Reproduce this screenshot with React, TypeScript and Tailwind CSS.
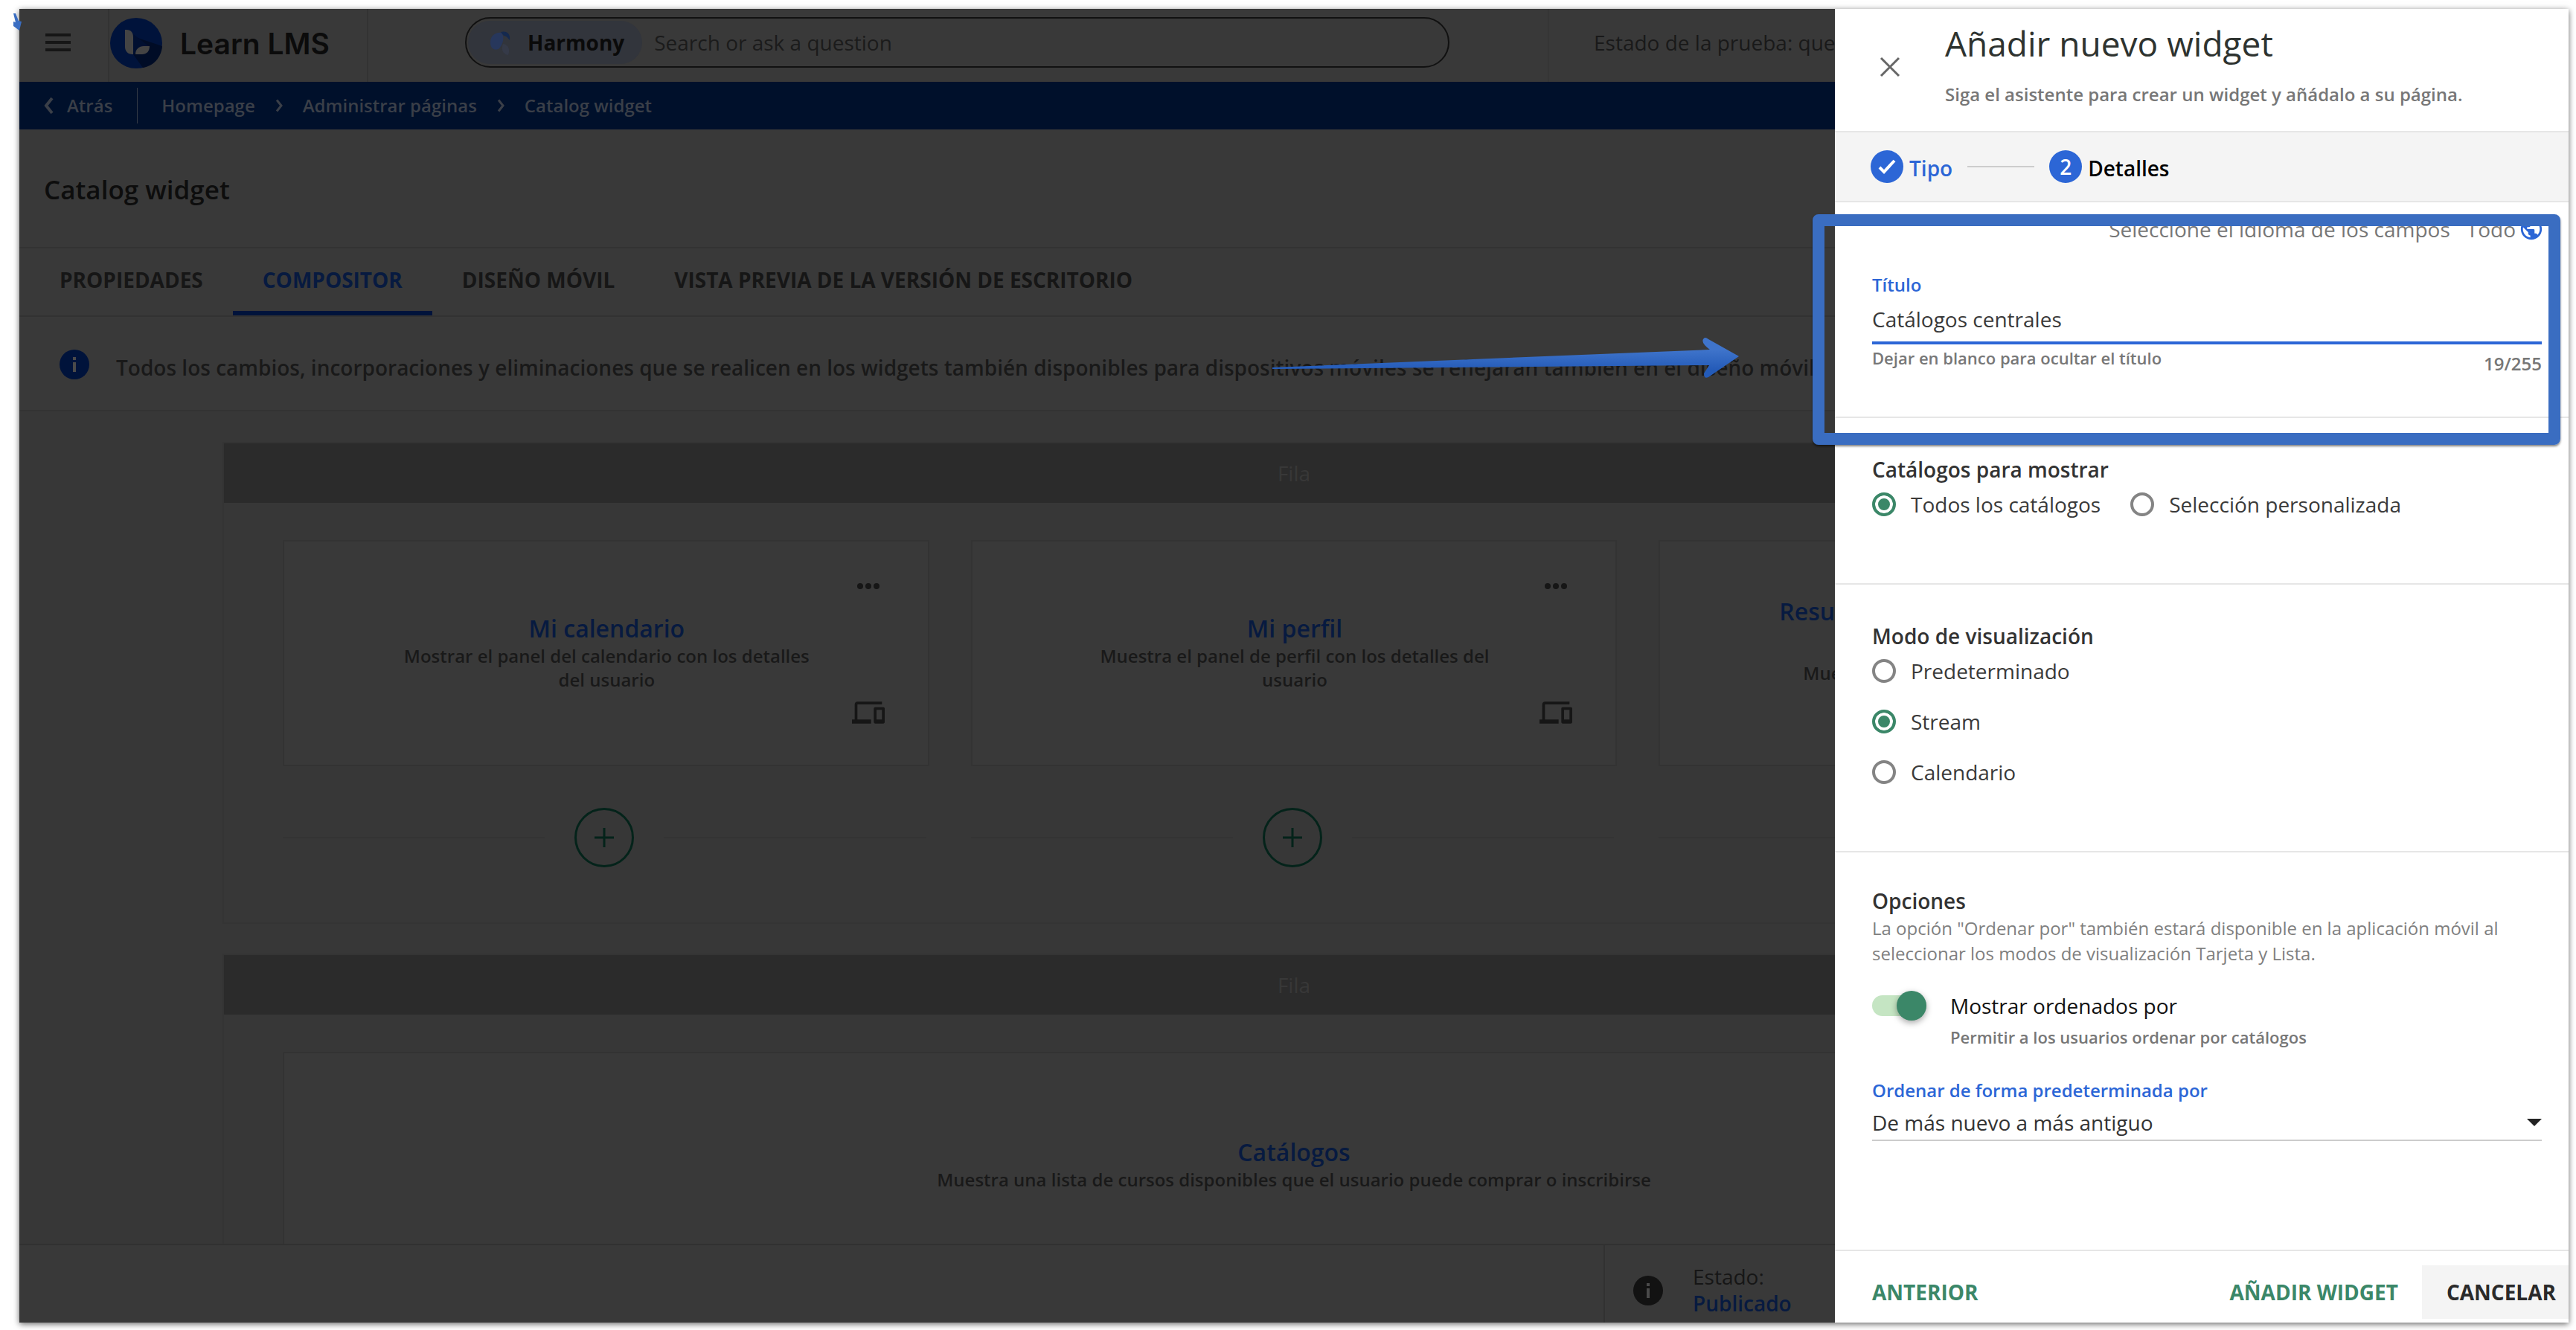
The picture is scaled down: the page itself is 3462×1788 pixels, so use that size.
import { useState, type ReactNode } from "react";
import { MdDevices, MdPublic } from "react-icons/md";

function InfoIcon({ className }: { className: string }) {
  return (
    <svg viewBox="0 0 40 40" className={className} aria-hidden="true">
      <circle cx="20" cy="20" r="20" fill="currentColor" />
      <rect x="18" y="10" width="4" height="4" fill="#4a4a4a" />
      <rect x="18" y="17" width="4" height="13" fill="#4a4a4a" />
    </svg>
  );
}

function Chevron({ className }: { className: string }) {
  return (
    <svg viewBox="0 0 10 18" className={className} fill="none" stroke="currentColor" strokeWidth="3" aria-hidden="true">
      <path d="M2 1.5 8 9l-6 7.5" />
    </svg>
  );
}

function TopBar() {
  return (
    <header className="flex h-[98px] shrink-0 items-stretch bg-[#393939]">
      <button aria-label="Menú" className="flex w-[119px] items-center pl-[35px] pb-2">
        <svg viewBox="0 0 34 24" className="h-6 w-[34px] text-[#161616]" fill="currentColor">
          <rect width="34" height="4" />
          <rect y="10" width="34" height="4" />
          <rect y="20" width="34" height="4" />
        </svg>
      </button>
      <a href="#" className="flex w-[350px] items-center gap-6 border-x-2 border-[#333] pl-px pb-[6px]">
        <svg viewBox="0 0 70 68" className="h-[68px] w-[70px]" aria-hidden="true">
          <ellipse cx="35" cy="34" rx="35" ry="34" fill="#00133b" />
          <path d="M31 25 70 38C69 53 58 65 44 67L31 49z" fill="#000c26" />
          <path d="M31 22 52 38 31 49z" fill="#000f30" />
          <path d="M20 16h2c6 0 9 4 9 10v23h-1c-6 0-10-4-10-10z" fill="#444" />
          <path d="M34 49c0-7 5-11 11-11h8c0 7-4 11-10 11z" fill="#444" />
        </svg>
        <span className="font-['Inter'] text-[39px] font-semibold leading-none text-[#0b0b0b]">Learn LMS</span>
      </a>
      <div className="flex w-[1587px] items-center border-r-2 border-[#353535] pb-2 pl-[130px]">
        <div className="flex h-[68px] w-[1323px] items-center rounded-full border-2 border-[#111] px-[2px]">
          <button className="flex h-[58px] items-center gap-[18px] rounded-full bg-[#32353c] pl-7 pr-6 text-[28px] font-bold text-[#0a0a0a]">
            <svg viewBox="0 0 34 40" className="h-10 w-[34px]" aria-hidden="true">
              <path d="M2 20C2 11 9 6 17 7c4 5 3 14-3 21-3 3-12 3-12-8z" fill="#27375c" />
              <path d="M16 6c8-2 13 2 12 11-3-4-5-6-8-6z" fill="#14294f" />
              <path d="M19 22c7 1 10 7 7 15-7-1-10-7-7-15z" fill="#353a48" />
            </svg>
            Harmony
          </button>
          <input
            aria-label="Search or ask a question"
            placeholder="Search or ask a question"
            className="ml-4 h-full min-w-0 flex-1 bg-transparent text-[28px] outline-none placeholder:text-[#1b1b1b]"
          />
        </div>
      </div>
      <p className="self-center pb-2 pl-[60px] text-[28px] text-[#191919]">Estado de la prueba: que</p>
    </header>
  );
}

function Breadcrumbs() {
  return (
    <nav className="flex h-16 shrink-0 items-center bg-[#00102b] text-2xl font-semibold text-[#3a3f48]">
      <a href="#" className="flex items-center gap-[17px] pl-[33px]">
        <Chevron className="h-6 w-[14px] rotate-180" />
        Atrás
      </a>
      <span className="ml-[33px] h-12 w-px bg-[#333a46]" />
      <a href="#" className="ml-[32px]">Homepage</a>
      <Chevron className="mx-[27px] h-[18px] w-[10px]" />
      <a href="#">Administrar páginas</a>
      <Chevron className="mx-[27px] h-[18px] w-[10px]" />
      <a href="#">Catalog widget</a>
    </nav>
  );
}

function Tabs() {
  const tabs = ["PROPIEDADES", "COMPOSITOR", "DISEÑO MÓVIL", "VISTA PREVIA DE LA VERSIÓN DE ESCRITORIO"];
  return (
    <div role="tablist" className="flex h-[92px] shrink-0 border-b-2 border-[#323232] pl-[14px]">
      {tabs.map((tab, i) => (
        <button
          key={tab}
          role="tab"
          aria-selected={i === 1}
          className={
            i === 1
              ? "border-b-[6px] border-[#00133b] px-10 text-[28px] font-bold text-[#071a40]"
              : "border-b-[6px] border-transparent px-10 text-[28px] font-bold text-[#161616]"
          }
        >
          {tab}
        </button>
      ))}
    </div>
  );
}

function Row({ children }: { children: ReactNode }) {
  return (
    <section className="mx-auto w-[2880px] shrink-0 border-2 border-[#343434]">
      <h2 className="h-20 bg-[#2b2b2b] text-center text-[28px] leading-[80px] text-[#383838]">Fila</h2>
      <div className="px-[79px] pt-[50px]">{children}</div>
    </section>
  );
}

function Card({ title, text }: { title: string; text: string }) {
  return (
    <article className="flex h-[304px] border-2 border-[#333] bg-[#393939] pr-[58px]">
      <div className="min-w-0 flex-1 pl-[144px] pr-[40px] pt-[96px] text-center">
        <h3 className="text-[32px] font-semibold leading-[42px] text-[#071a40]">{title}</h3>
        <p className="text-2xl font-semibold leading-8 text-[#191919]">{text}</p>
      </div>
      <div className="flex w-11 flex-col items-center justify-between pb-[48px] pt-[56px] text-[#161616]">
        <button aria-label="Más opciones" className="flex gap-[3px]">
          <span className="size-2 rounded-full bg-[#161616]" />
          <span className="size-2 rounded-full bg-[#161616]" />
          <span className="size-2 rounded-full bg-[#161616]" />
        </button>
        <MdDevices className="size-11" />
      </div>
    </article>
  );
}

function AddLine() {
  return (
    <div className="mt-14 flex items-center pr-1">
      <span className="h-[2px] flex-1 bg-[#333]" />
      <button aria-label="Añadir" className="mx-10 flex size-20 items-center justify-center rounded-full border-[3px] border-[#04231a]">
        <svg viewBox="0 0 26 26" className="size-[26px]" stroke="#04231a" strokeWidth="3" aria-hidden="true">
          <path d="M13 0v26M0 13h26" />
        </svg>
      </button>
      <span className="h-[2px] flex-1 bg-[#333]" />
    </div>
  );
}

function Canvas() {
  return (
    <main className="flex min-h-0 flex-1 flex-col gap-10 overflow-hidden bg-[#373737] pt-[41px]">
      <Row>
        <div className="grid grid-cols-3 gap-x-14 pb-[74px]">
          <div>
            <Card title="Mi calendario" text="Mostrar el panel del calendario con los detalles del usuario" />
            <AddLine />
          </div>
          <div>
            <Card title="Mi perfil" text="Muestra el panel de perfil con los detalles del usuario" />
            <AddLine />
          </div>
          <div>
            <article className="h-[304px] border-2 border-[#333] bg-[#393939] pl-40 pt-[73px]">
              <h3 className="h-[88px] text-[32px] font-semibold leading-[42px] text-[#071a40]">Resu</h3>
              <p className="pl-8 text-2xl font-semibold leading-8 text-[#191919]">Mue</p>
            </article>
            <AddLine />
          </div>
        </div>
      </Row>
      <Row>
        <article className="flex h-[304px] flex-col items-center border-2 border-[#333] bg-[#393939] pt-[112px]">
          <h3 className="text-[32px] font-semibold leading-[42px] text-[#071a40]">Catálogos</h3>
          <p className="text-2xl font-semibold leading-8 text-[#191919]">
            Muestra una lista de cursos disponibles que el usuario puede comprar o inscribirse
          </p>
        </article>
      </Row>
    </main>
  );
}

function StatusBar() {
  return (
    <footer className="flex h-[106px] shrink-0 border-t-2 border-[#313131] bg-[#393939] pl-[2129px]">
      <div className="flex gap-10 border-l-2 border-[#313131] pl-[38px]">
        <InfoIcon className="mt-[41px] size-10 text-[#121212]" />
        <p className="pt-[24px] text-[28px] leading-9 text-[#161616]">
          Estado:
          <br />
          <span className="font-semibold text-[#071a40]">Publicado</span>
        </p>
      </div>
    </footer>
  );
}

type RadioProps = { name: string; label: string; checked: boolean; onChange: () => void };

function Radio({ name, label, checked, onChange }: RadioProps) {
  return (
    <label className="flex items-center gap-5 text-[28px] leading-8 text-[#3a3a3a]">
      <input
        type="radio"
        name={name}
        checked={checked}
        onChange={onChange}
        className="size-8 shrink-0 appearance-none rounded-full border-4 border-[#848484] bg-white checked:border-[#3b8768] checked:bg-[#3b8768] checked:shadow-[inset_0_0_0_4px_white]"
      />
      {label}
    </label>
  );
}

function Panel() {
  const [scope, setScope] = useState("Todos los catálogos");
  const [mode, setMode] = useState("Stream");
  const [title, setTitle] = useState("Catálogos centrales");
  const [sorted, setSorted] = useState(true);

  return (
    <aside className="absolute inset-y-0 right-0 flex w-[986px] flex-col bg-white text-[#333]">
      <div className="flex h-[166px] shrink-0 border-b-2 border-[#e6e6e6] pl-[60px]">
        <button aria-label="Cerrar" className="mt-[64px] size-[28px] text-[#666]">
          <svg viewBox="0 0 28 28" stroke="currentColor" strokeWidth="3" aria-hidden="true">
            <path d="M2 2l24 24M26 2 2 26" />
          </svg>
        </button>
        <div className="pl-[60px] pt-[15px]">
          <h1 className="text-[46px] leading-[62px] text-[#2e3330]">Añadir nuevo widget</h1>
          <p className="mt-[20px] text-2xl font-semibold leading-9 text-[#777]">
            Siga el asistente para crear un widget y añádalo a su página.
          </p>
        </div>
      </div>

      <ol className="flex h-[94px] shrink-0 items-center border-b-2 border-[#e6e6e6] bg-[#f4f4f4] pl-12 text-[28px] font-semibold">
        <li className="flex items-center gap-2 text-[#2c66d6]">
          <span className="flex size-11 items-center justify-center rounded-full bg-[#2c66d6]">
            <svg viewBox="0 0 24 20" className="h-5 w-6" fill="none" stroke="white" strokeWidth="4" aria-hidden="true">
              <path d="M2 11l6 6L22 2" />
            </svg>
          </span>
          <span className="pt-1">Tipo</span>
        </li>
        <li aria-hidden="true" className="mx-5 h-[2px] w-[90px] bg-[#ccc]" />
        <li className="flex items-center gap-2 text-black">
          <span className="flex size-11 items-center justify-center rounded-full bg-[#2c66d6] text-white">2</span>
          <span className="pt-1">Detalles</span>
        </li>
      </ol>

      <div className="min-h-0 flex-1 overflow-hidden">
        <section className="h-[290px] border-b-2 border-[#e6e6e6] pl-[50px] pr-9 pt-[17px]">
          <div className="flex h-[38px] items-center justify-end text-[28px] leading-[38px] text-[#777]">
            Seleccione el idioma de los campos
            <button className="ml-[22px] flex items-center gap-1">
              Todo
              <MdPublic className="-mr-[3px] size-[34px] text-[#2c66d6]" />
            </button>
          </div>
          <label htmlFor="widget-title" className="mt-[40px] block text-2xl font-semibold leading-8 text-[#2c66d6]">
            Título
          </label>
          <input
            id="widget-title"
            value={title}
            onChange={(e) => setTitle(e.target.value)}
            className="block h-[64px] w-full border-b-4 border-[#2c66d6] bg-transparent text-[28px] text-[#3a3a3a] outline-none"
          />
          <div className="flex justify-between font-semibold leading-8 text-[#777]">
            <span className="pt-[2px] text-[22px]">Dejar en blanco para ocultar el título</span>
            <span className="pt-[10px] text-2xl">{title.length}/255</span>
          </div>
        </section>

        <section className="h-[224px] border-b-2 border-[#e6e6e6] pl-[50px] pt-[49px]">
          <h2 className="text-[28px] font-semibold leading-[40px]">Catálogos para mostrar</h2>
          <div className="flex gap-10 pt-[11px]">
            {["Todos los catálogos", "Selección personalizada"].map((label) => (
              <Radio key={label} name="scope" label={label} checked={scope === label} onChange={() => setScope(label)} />
            ))}
          </div>
        </section>

        <section className="h-[360px] border-b-2 border-[#e6e6e6] pl-[50px] pt-[49px]">
          <h2 className="text-[28px] font-semibold leading-[40px]">Modo de visualización</h2>
          <div className="flex flex-col gap-9 pt-[11px]">
            {["Predeterminado", "Stream", "Calendario"].map((label) => (
              <Radio key={label} name="mode" label={label} checked={mode === label} onChange={() => setMode(label)} />
            ))}
          </div>
        </section>

        <section className="pl-[50px] pr-9 pt-[45px]">
          <h2 className="text-[28px] font-semibold leading-[40px]">Opciones</h2>
          <p className="text-2xl leading-[34px] text-[#808080]">
            La opción "Ordenar por" también estará disponible en la aplicación móvil al seleccionar los modos de
            visualización Tarjeta y Lista.
          </p>
          <div className="mt-8 flex gap-8">
            <input
              id="sort-toggle"
              type="checkbox"
              role="switch"
              checked={sorted}
              onChange={() => setSorted(!sorted)}
              className="relative mt-[7px] h-7 w-[73px] appearance-none rounded-full bg-[#dddddd] before:absolute before:-top-[6px] before:left-0 before:size-10 before:rounded-full before:bg-[#999] before:shadow-[0_3px_8px_rgba(0,0,0,0.35)] checked:bg-[#c5e5c3] checked:before:left-[33px] checked:before:bg-[#3b8768]"
            />
            <div>
              <label htmlFor="sort-toggle" className="block text-[28px] leading-[42px] text-[#111]">
                Mostrar ordenados por
              </label>
              <p className="text-[22px] font-semibold leading-[42px] text-[#777]">
                Permitir a los usuarios ordenar por catálogos
              </p>
            </div>
          </div>
          <label htmlFor="sort-order" className="mt-[35px] block text-2xl font-semibold leading-8 text-[#2c66d6]">
            Ordenar de forma predeterminada por
          </label>
          <div className="relative">
            <select id="sort-order" className="h-[52px] w-full appearance-none border-b-2 border-[#ccc] bg-transparent pt-1 text-[28px] text-[#333] outline-none">
              <option>De más nuevo a más antiguo</option>
            </select>
            <svg viewBox="0 0 20 10" className="pointer-events-none absolute right-0 top-[22px] h-[10px] w-5" aria-hidden="true">
              <path d="M0 0h20L10 10z" fill="#222" />
            </svg>
          </div>
        </section>
      </div>

      <div className="flex h-[98px] shrink-0 items-center border-t-2 border-[#e6e6e6] pl-[50px] pt-[14px] text-[28px] font-bold text-[#3b8768]">
        <button>ANTERIOR</button>
        <button className="ml-auto mr-8">AÑADIR WIDGET</button>
        <button className="h-[72px] bg-[#f4f4f4] pl-[33px] pr-[17px] text-[#2a2a2a]">CANCELAR</button>
      </div>
    </aside>
  );
}

export default function App() {
  return (
    <div className="relative flex h-screen flex-col bg-white pb-[10px] pl-[26px] pr-[10px] pt-3 font-['Open_Sans',sans-serif]">
      <div className="relative flex min-h-0 flex-1 flex-col overflow-hidden bg-[#393939] shadow-[0_2px_8px_rgba(0,0,0,0.6)]">
        <TopBar />
        <Breadcrumbs />
        <div className="flex h-[160px] shrink-0 items-center border-b-2 border-[#333] pt-1 pl-[33px]">
          <h1 className="text-[35px] font-semibold text-[#0d0d0d]">Catalog widget</h1>
        </div>
        <Tabs />
        <div className="flex h-[127px] shrink-0 items-center gap-9 border-b-2 border-[#333] pl-[54px] pt-[2px]">
          <InfoIcon className="size-10 shrink-0 text-[#00133b]" />
          <p className="whitespace-nowrap pt-2 text-[28px] font-semibold text-[#191919]">
            Todos los cambios, incorporaciones y eliminaciones que se realicen en los widgets también disponibles para
            dispositivos móviles se reflejarán también en el diseño móvil
          </p>
        </div>
        <Canvas />
        <StatusBar />
        <Panel />
      </div>

      <svg viewBox="0 0 12 24" className="absolute left-[18px] top-[18px] h-6 w-3" aria-hidden="true">
        <path d="M0 0h3l4 10 4 1-3 12-8-6 0-6 3 1z" fill="#3a6dc1" />
      </svg>
      <svg viewBox="0 0 628 56" className="absolute left-[1710px] top-[453px] h-14 w-[628px]" aria-hidden="true">
        <defs>
          <linearGradient id="arrow" x1="0" y1="0" x2="0" y2="1">
            <stop offset="0.3" stopColor="#3f74cb" />
            <stop offset="0.8" stopColor="#245bb8" />
          </linearGradient>
        </defs>
        <path d="M0 41 588 17Q576 8 579 3 581-1 586 3L627 26 586 54Q580 57 580 49L587 38 0 43z" fill="url(#arrow)" />
      </svg>
      <div className="pointer-events-none absolute right-[21px] top-[288px] h-[310px] w-[1005px] rounded-lg border-16 border-[#3a6dc1] shadow-[0_2px_3px_rgba(0,0,0,0.5)]" />
    </div>
  );
}
